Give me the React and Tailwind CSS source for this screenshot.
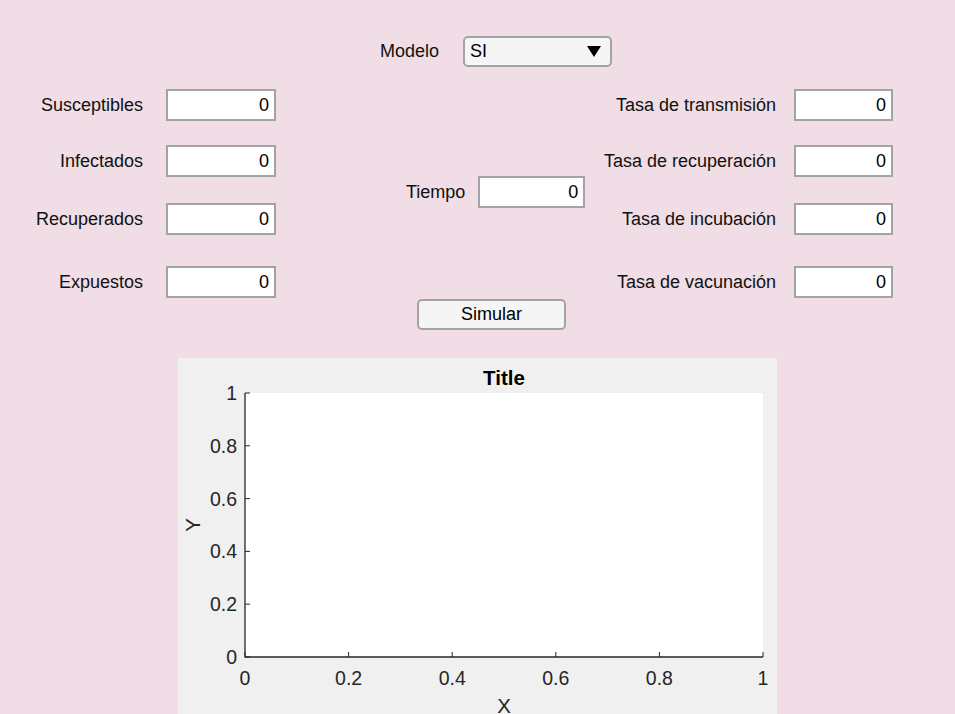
import React from "react";

const leftRows = [
  { label: "Susceptibles", mt: "mt-0" },
  { label: "Infectados", mt: "mt-[24px]" },
  { label: "Recuperados", mt: "mt-[26px]" },
  { label: "Expuestos", mt: "mt-[31px]" },
];

const rightRows = [
  { label: "Tasa de transmisión", mt: "mt-0" },
  { label: "Tasa de recuperación", mt: "mt-[24px]" },
  { label: "Tasa de incubación", mt: "mt-[26px]" },
  { label: "Tasa de vacunación", mt: "mt-[31px]" },
];

function NumField({ width }) {
  return (
    <div
      className={`${width} h-[32px] bg-white border-2 border-[#a3a3a3] flex items-center justify-end pr-[5px] text-black`}
    >
      0
    </div>
  );
}

function Plot() {
  const x0 = 67;
  const x1 = 585;
  const y0 = 35;
  const y1 = 299;
  const ticks = [0, 0.2, 0.4, 0.6, 0.8, 1];
  const axis = "#262626";
  return (
    <svg width="599" height="360" className="block">
      <rect x={x0} y={y0} width={x1 - x0} height={y1 - y0} fill="#ffffff" />
      <text
        x="326"
        y="27"
        textAnchor="middle"
        fontSize="20.5"
        fontWeight="bold"
        fill="#000"
        fontFamily="Liberation Sans, Arial, sans-serif"
      >
        Title
      </text>
      {ticks.map((t) => {
        const y = y1 - t * (y1 - y0);
        const x = x0 + t * (x1 - x0);
        return (
          <g key={t}>
            <line x1={x0} y1={y} x2={x0 + 5} y2={y} stroke={axis} strokeWidth="1" />
            <line x1={x} y1={y1} x2={x} y2={y1 - 5} stroke={axis} strokeWidth="1" />
            <text
              x={x0 - 8}
              y={y + 7}
              textAnchor="end"
              fontSize="19.5"
              fill="#262626"
              fontFamily="Liberation Sans, Arial, sans-serif"
            >
              {t}
            </text>
            <text
              x={x}
              y={327}
              textAnchor="middle"
              fontSize="19.5"
              fill="#262626"
              fontFamily="Liberation Sans, Arial, sans-serif"
            >
              {t}
            </text>
          </g>
        );
      })}
      <line x1={x0} y1={y0} x2={x0} y2={y1 + 0.5} stroke={axis} strokeWidth="1.3" />
      <line x1={x0} y1={y1} x2={x1} y2={y1} stroke={axis} strokeWidth="1.3" />
      <text
        x="326"
        y="355"
        textAnchor="middle"
        fontSize="20.5"
        fill="#262626"
        fontFamily="Liberation Sans, Arial, sans-serif"
      >
        X
      </text>
      <text
        x="22"
        y="167"
        textAnchor="middle"
        fontSize="20.5"
        fill="#262626"
        transform="rotate(-90 22 167)"
        fontFamily="Liberation Sans, Arial, sans-serif"
      >
        Y
      </text>
    </svg>
  );
}

export default function App() {
  return (
    <div className="w-[955px] h-[714px] overflow-hidden bg-[#f0dde5] font-['Liberation_Sans',Arial,sans-serif] text-[18px] text-[#111]">
      <div className="flex items-center pt-[36px] pl-[380px]">
        <span>Modelo</span>
        <div className="ml-[24px] w-[149px] h-[31px] rounded-[5px] border-2 border-[#a3a3a3] bg-[#f5f5f5] flex items-center justify-between pl-[5px] pr-[9px] text-black">
          <span>SI</span>
          <svg width="14" height="11" viewBox="0 0 14 11">
            <path d="M0 0 H14 L7 11 Z" fill="#000" />
          </svg>
        </div>
      </div>

      <div className="flex mt-[22px]">
        <div className="w-[276px] flex flex-col">
          {leftRows.map((r) => (
            <div key={r.label} className={`flex items-center ${r.mt}`}>
              <span className="w-[143px] text-right">{r.label}</span>
              <div className="ml-[23px]">
                <NumField width="w-[110px]" />
              </div>
            </div>
          ))}
        </div>

        <div className="w-[314px] pt-[87px] pl-[130px]">
          <div className="flex items-center">
            <span>Tiempo</span>
            <div className="ml-[13px]">
              <NumField width="w-[107px]" />
            </div>
          </div>
        </div>

        <div className="flex flex-col">
          {rightRows.map((r) => (
            <div key={r.label} className={`flex items-center ${r.mt}`}>
              <span className="w-[186px] text-right">{r.label}</span>
              <div className="ml-[18px]">
                <NumField width="w-[99px]" />
              </div>
            </div>
          ))}
        </div>
      </div>

      <div className="mt-px ml-[417px] w-[149px] h-[31px] rounded-[5px] border-2 border-[#a3a3a3] bg-[#f5f5f5] flex items-center justify-center text-black">
        Simular
      </div>

      <div className="mt-[28px] ml-[178px] w-[599px] h-[360px] bg-[#f0f0f0]">
        <Plot />
      </div>
    </div>
  );
}
